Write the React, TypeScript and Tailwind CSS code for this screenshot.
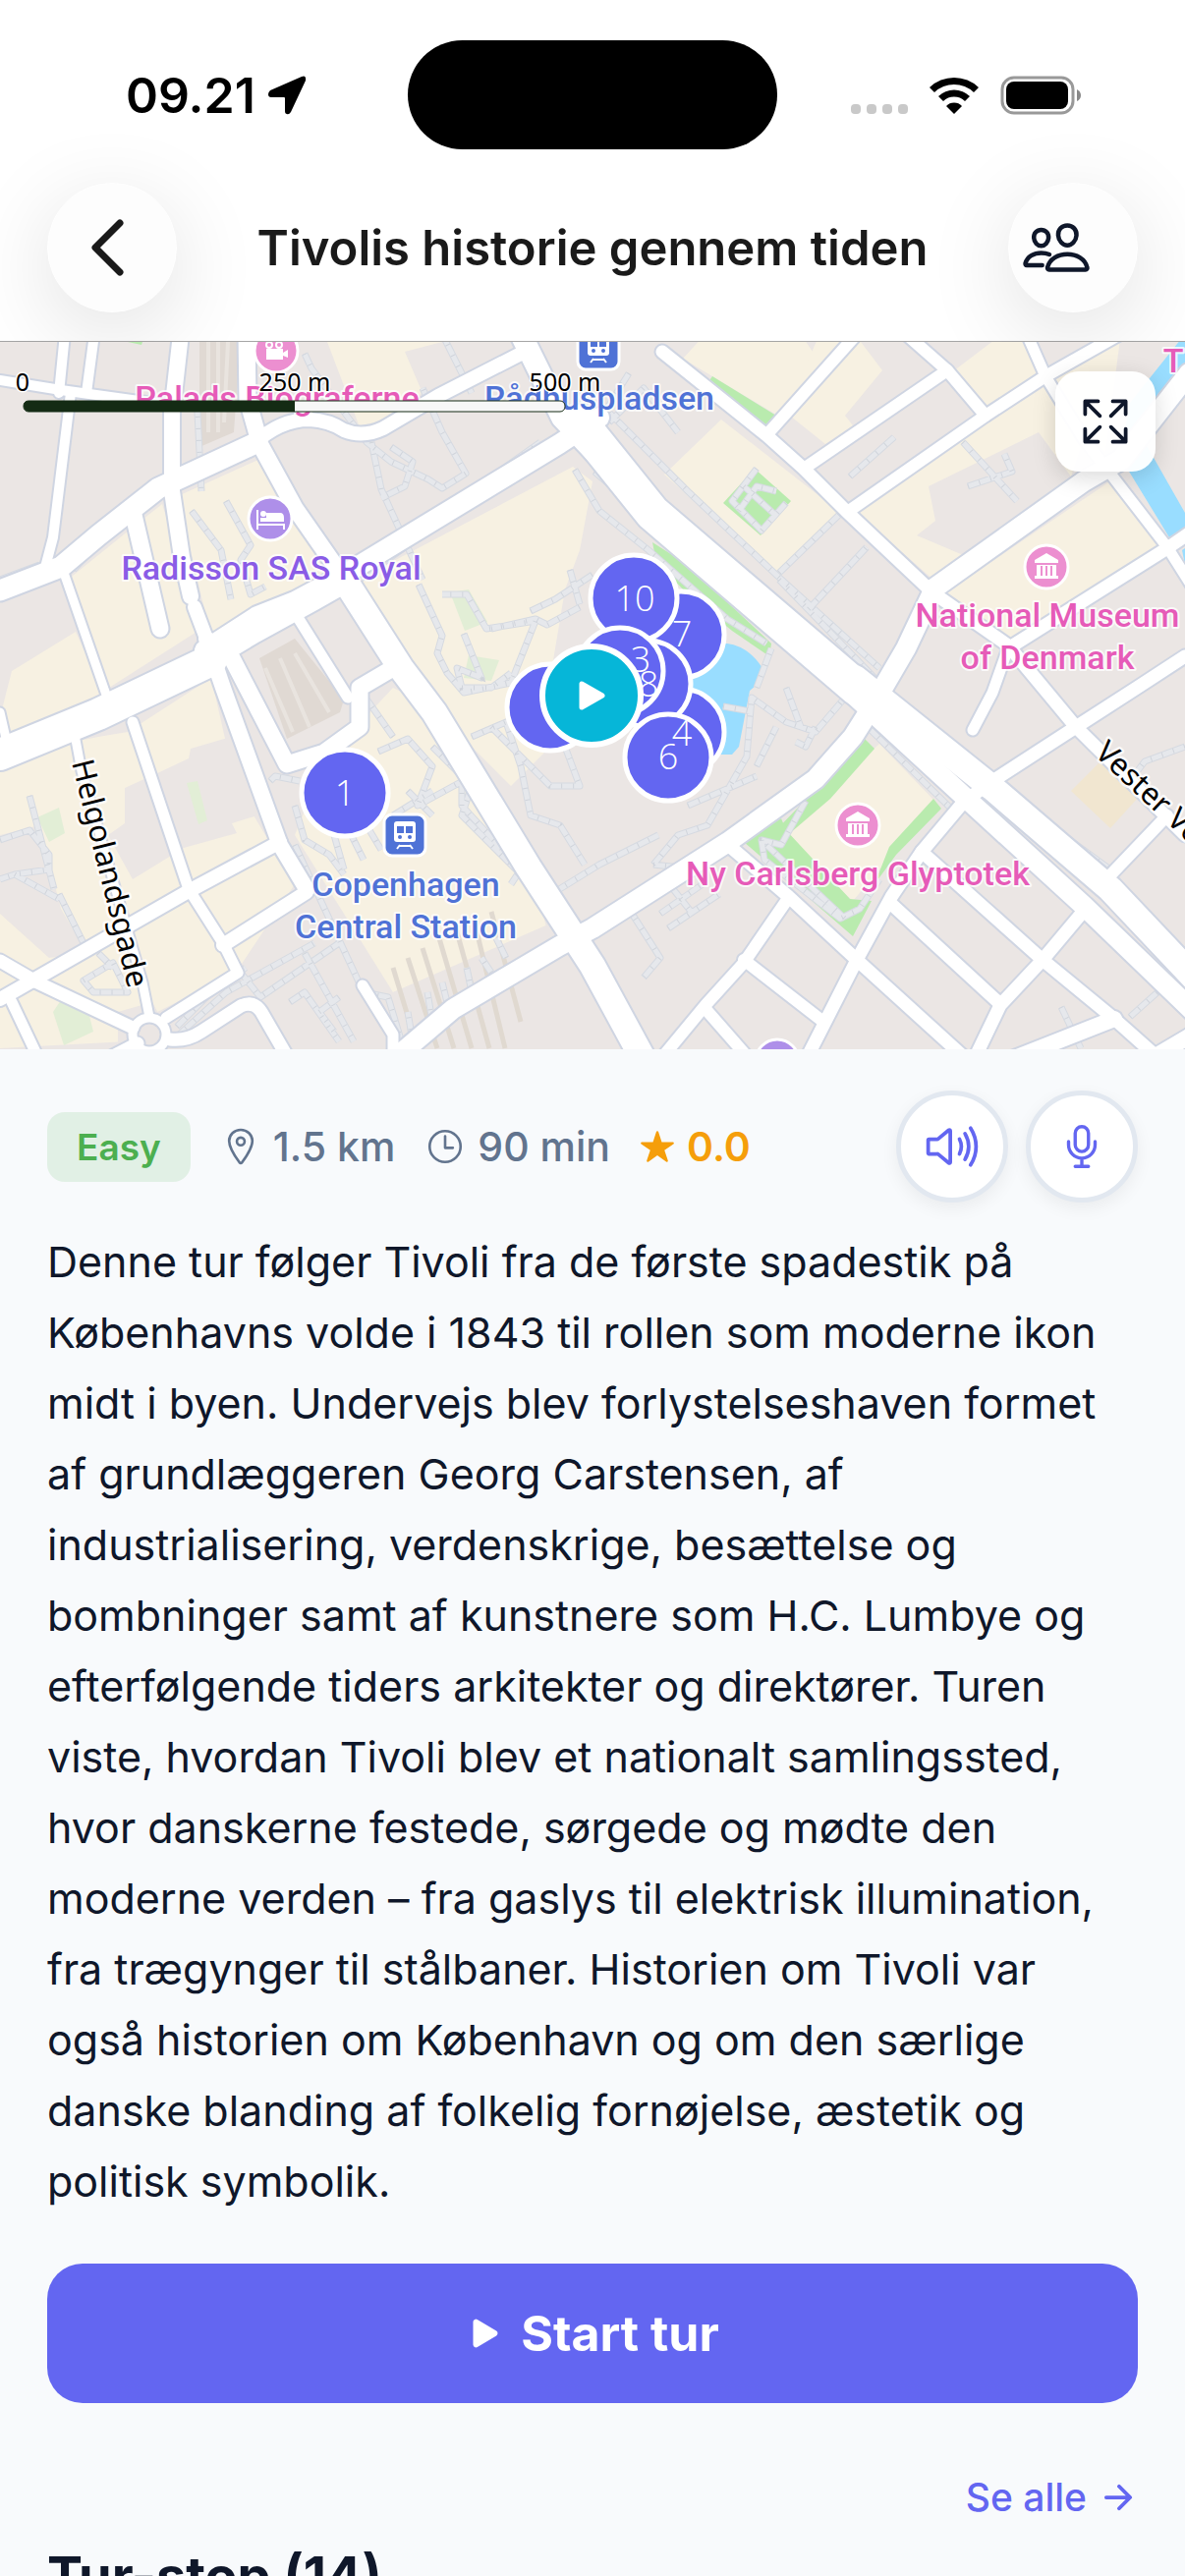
import type { ReactNode } from "react";
import {
  IoArrowForward,
  IoExpandOutline,
  IoLocationOutline,
  IoMicOutline,
  IoPeopleOutline,
  IoPlay,
  IoStar,
  IoTimeOutline,
  IoVolumeHighOutline,
} from "react-icons/io5";

type Road = { d: string; w: number };

const roads: Road[] = [
  { d: "M66 340L60 400M96 340L88 400", w: 10 },
  { d: "M0 387L62 397L170 412", w: 10 },
  { d: "M72 400L54 547L44 585", w: 10 },
  { d: "M184 340L175 420L175 500L185 567L194 607", w: 16 },
  { d: "M198 618L212 655", w: 14 },
  { d: "M0 601L62 577L100 545L161 497L258 452", w: 21 },
  { d: "M258 452Q285 427 315 427Q335 428 350 438Q369 446 390 436L446 403L530 360", w: 14 },
  { d: "M251 340L252 407L265 453L300 517L346 583", w: 17 },
  { d: "M346 583L408 680L442 725L538 883L603 983L653 1075", w: 26 },
  { d: "M0 768L100 727L215 672", w: 32 },
  { d: "M208 662L262 627L300 612L345 588L569 452L610 425", w: 20 },
  { d: "M215 672L260 645L320 612L352 594", w: 18 },
  { d: "M530 340L572 425L610 465", w: 22 },
  { d: "M590 430L664 522L872 700", w: 36 },
  { d: "M850 690L988 817L1103 922L1215 1030", w: 20 },
  { d: "M870 690L1010 802L1130 905L1215 995", w: 26 },
  { d: "M674 358L780 443L818 477L861 520L949 603L1026 657L1095 740L1206 850", w: 13 },
  { d: "M872 340L780 443", w: 12 },
  { d: "M922 340L964 377L1003 423", w: 12 },
  { d: "M818 477L964 377", w: 12 },
  { d: "M864 520L1003 423L1064 383L1140 340", w: 12 },
  { d: "M1045 340L1064 383L1103 447L1188 557L1212 595", w: 11 },
  { d: "M949 600L1103 490L1141 468L1210 380", w: 20 },
  { d: "M1026 660L1188 558L1210 543", w: 13 },
  { d: "M949 603L922 660L887 720L868 750L830 793L741 857L603 945L569 963L461 1027L408 1072", w: 20 },
  { d: "M1026 660L1010 705L990 743", w: 11 },
  { d: "M1206 668L1157 700L1095 740L1007 797L980 817L938 867L907 913L872 977L822 1075", w: 13 },
  { d: "M741 860L803 913L872 977L980 1075", w: 13 },
  { d: "M803 913L757 980L718 1023L675 1075", w: 12 },
  { d: "M757 977L838 1040M718 1027L760 1075", w: 12 },
  { d: "M907 920L1018 1022", w: 13 },
  { d: "M938 867L1061 977L1134 1037L1180 1078", w: 13 },
  { d: "M1103 927L1061 977L1018 1023L993 1075", w: 13 },
  { d: "M1126 895L1188 830", w: 12 },
  { d: "M1030 1078L1134 1037M1176 1075L1210 1055", w: 16 },
  { d: "M77 753L83 785L145 1000L152 1035", w: 9 },
  { d: "M135 735L192 905L227 960L242 990L169 1036", w: 11 },
  { d: "M210 650L227 700L285 860L312 905", w: 16 },
  { d: "M236 670L292 778L330 766L366 740L366 700L400 680", w: 17 },
  { d: "M0 1017L192 907L285 857M227 962L312 908", w: 14 },
  { d: "M0 978L38 1000L135 1046", w: 13 },
  { d: "M173 1058Q190 1060 205 1050L245 1024Q258 1018 266 1030L292 1075M140 1062L115 1075", w: 13 },
  { d: "M12 1020L38 1075", w: 11 },
  { d: "M65 583L108 707L114 725M0 725L8 760", w: 9 },
  { d: "M369 1003L400 1053L400 1075", w: 11 },
  { d: "M304 630L354 710", w: 11 },
  { d: "M135 520L163 640", w: 17 },
];

const blocks = [
  "181,505 265,467 340,590 215,650",
  "131,540 165,513 205,640 111,700 69,590",
  "12,683 77,643 110,715 0,770 0,730",
  "330,340 450,348 412,358 430,400 368,440",
  "583,475 603,490 590,560 575,600 560,690 560,760 520,800 440,720 355,595",
  "695,365 718,340 815,340 837,373 795,425",
  "834,340 870,340 898,377 860,423 868,433 840,452 800,420",
  "734,427 857,523 788,583 676,483",
  "870,520 1003,430 1062,388 1100,455 1090,485 1057,440 945,495 952,530 933,545 985,567 950,590",
  "970,378 1020,340 1045,340 1062,380 1003,420",
  "1070,385 1140,345 1125,460 1105,440",
  "960,605 1134,487 1184,557 1026,653",
  "895,757 953,817 868,917 795,850",
  "0,775 75,755 100,750 130,745 215,690 240,800 300,900 240,990 160,1030 130,1060 0,1067",
  "330,775 400,700 440,720 545,900 560,960 520,965 400,1010 300,850",
];

const greyBlocks = [
  "158,788 192,772 194,762 235,750 262,830 236,838 241,848 187,863 135,895 110,850 127,838 127,802",
  "0,850 40,840 62,925 88,970 50,975 0,930",
  "200,1030 310,960 345,960 390,1067 180,1067",
  "400,1010 560,940 603,985 640,1067 410,1067",
  "120,1030 155,1020 180,1067 120,1067",
];

const greens = [
  "725,383 790,423 776,437 720,390",
  "768,477 805,510 774,545 736,512",
  "664,552 700,575 785,655 783,668 745,642 700,605 668,572",
  "757,857 795,833 800,845 865,915 887,917 868,953",
  "880,752 890,762 845,813 790,860 785,850",
  "950,813 958,823 912,870 890,900 905,862",
  "905,730 1000,792 985,798",
  "130,348 145,348 144,351",
];

const paleGreens = [
  "458,603 477,600 496,633 473,642",
  "477,667 508,672 500,693 472,690",
  "38,832 60,822 66,848 50,857",
  "190,797 201,795 211,835 202,839",
  "62,1018 90,1030 95,1050 65,1064 54,1030",
];

const footways =
  "M310 360L317 375L373 450L398 470L436 488L450 497L474 482L450 440L430 395M378 450L388 498L430 590M398 455L420 470L412 495L388 507M352 600L545 462M356 588L550 450" +
  "M426 595L450 647L445 665L455 685L472 705L520 695L545 632L495 640L475 605L450 605M472 645L490 690L465 680L470 700L500 700L520 685M585 478L610 520L660 560L740 630L780 655" +
  "M500 640L545 630L557 636L590 618M580 580L590 615M545 462L540 470M605 480L790 640M620 420L700 500L790 585L895 680" +
  "M793 583L855 523M823 620L882 557M793 590L890 690M620 430L655 395L690 440M640 380L615 420" +
  "M770 477L745 510L775 540L800 512M757 495L790 525M752 520L770 495L790 500" +
  "M665 880L690 850L720 840L760 770L765 710L800 735L830 745L860 710M665 880L710 885L760 835L790 815M770 780L790 740M545 920L610 880L670 850M700 820L770 790" +
  "M770 700L785 660M800 700L815 740M830 740L820 760L810 755M736 719L764 724" +
  "M885 742L970 825M900 720L1010 795M985 820L1100 915M1030 812L1130 885M1110 930L1206 1015" +
  "M820 815L795 860L775 855L778 875L855 935L875 925L895 895M780 860L860 935" +
  "M672 930L715 900M680 945L732 910M685 905L705 930M640 925L672 975L655 995" +
  "M980 450L1035 510M985 495L1030 480L1022 462M865 485L910 445" +
  "M385 765L415 752L440 780L425 820L480 790M400 830L440 805M440 760L480 800L470 830L530 890M415 700L445 745L455 755M470 795L470 820L530 885L520 900" +
  "M480 750L515 735L530 780L540 830L570 840L595 880M500 740L560 800L590 800L575 760" +
  "M300 820L310 855L335 870L350 890M275 795L280 790L305 795M300 860L370 1010L395 1015L410 1065M340 850L350 885M355 845L370 875M370 835L388 865M415 805L440 830" +
  "M0 855L30 845L50 870L50 885L15 890L0 895M15 890L60 915M30 810L55 905M60 910L85 960" +
  "M85 998L115 980L130 1010L95 1010ZM100 970L115 985M180 1055L230 1010L320 960M245 990L265 1015L345 960M310 970L360 1060M295 1020L310 1010L345 1060M345 1015L325 1030L340 1050" +
  "M200 400L205 500M180 1045L215 1010L250 985M365 700L400 750M75 580L155 490M0 590L40 575M450 340L480 400M195 520L225 560L235 610M230 510L255 555L245 570L255 605L270 597" +
  "M540 622L565 610L603 585M420 1060L415 1030M440 1040L435 1010M455 1020L450 1000M480 1010L475 985M500 990L490 975M515 975L505 955M1206 760L1165 775L1150 795M1150 1035L1206 985M1080 1025L1100 1067";

const rails = [
  "203,340 245,340 238,440 203,455",
  "264,670 300,650 350,712 346,725 292,752",
];

const markers = [
  { x: 560, y: 720 },
  { x: 693, y: 646 },
  { x: 693, y: 745 },
  { x: 645, y: 609 },
  { x: 659, y: 696 },
  { x: 631, y: 683 },
  { x: 680, y: 771 },
  { x: 351, y: 807 },
];

const markerLabels = [
  { x: 694, y: 658, label: "7" },
  { x: 694, y: 759, label: "4" },
  { x: 646, y: 622, label: "10" },
  { x: 660, y: 709, label: "8" },
  { x: 652, y: 684, label: "3" },
  { x: 680, y: 783, label: "6" },
  { x: 351, y: 820, label: "1" },
];

function MuseumPin({ x, y }: { x: number; y: number }) {
  return (
    <g transform={`translate(${x} ${y})`}>
      <circle r="22" fill="#ec8fd0" stroke="#fff" strokeWidth="3" />
      <path d="M-12 -7L0 -14L12 -7V-4H-12ZM-10 -2H10V9H12V12H-12V9H-10Z" fill="#fff" />
      <path d="M-5 -1V9M0 -1V9M5 -1V9" stroke="#ec8fd0" strokeWidth="2" />
    </g>
  );
}

function StationPin({ x, y }: { x: number; y: number }) {
  return (
    <g transform={`translate(${x} ${y})`}>
      <rect x="-21" y="-21" width="42" height="42" rx="8" fill="#4f72d6" stroke="#fff" strokeWidth="3" />
      <rect x="-11" y="-14" width="22" height="21" rx="3" fill="#fff" />
      <path d="M-8 -9H-1V-2H-8ZM1 -9H8V-2H1Z" fill="#4f72d6" />
      <circle cx="-5" cy="2" r="2" fill="#4f72d6" />
      <circle cx="5" cy="2" r="2" fill="#4f72d6" />
      <path d="M-5 10L-8 14M5 10L8 14M-6 11H6" stroke="#fff" strokeWidth="2" />
    </g>
  );
}

function MapLabel({ x, y, color, children }: { x: number; y: number; color: string; children: ReactNode }) {
  return (
    <text
      x={x}
      y={y}
      fill={color}
      textAnchor="middle"
      className="font-[Roboto,sans-serif] text-[34px] font-medium"
      stroke="#fff"
      strokeOpacity="0.8"
      strokeWidth="4"
      strokeLinejoin="round"
      paintOrder="stroke"
    >
      {children}
    </text>
  );
}

function TourMap() {
  return (
    <svg
      viewBox="0 348 1206 720"
      preserveAspectRatio="xMidYMid slice"
      className="block w-full"
      role="img"
      aria-label="Kort over turen"
    >
      <rect y="340" width="1206" height="740" fill="#ebe6e4" />
      {blocks.map((p) => (
        <polygon key={p} points={p} fill="#f7f1e2" />
      ))}
      {greyBlocks.map((p) => (
        <polygon key={p} points={p} fill="#ebe6e4" />
      ))}
      <polygon points="1120,775 1160,810 1130,843 1090,805" fill="#f1e6d0" />
      {paleGreens.map((p) => (
        <polygon key={p} points={p} fill="#e2eed6" />
      ))}
      {greens.map((p) => (
        <polygon key={p} points={p} fill="#b9ebae" />
      ))}
      <path d="M740 655Q762 658 776 680V692L763 703L752 760L745 768H690V655Z" fill="#99ddff" />
      <path d="M1206 340L1150 410L1140 465L1190 547L1206 538V522L1165 450L1206 380Z" fill="#99ddff" />
      <path d="M1203 560L1206 558V575Z" fill="#99ddff" />
      {rails.map((p) => (
        <polygon key={p} points={p} fill="#e0d9d3" />
      ))}
      <path
        d="M212 348V440M222 348V440M232 348L228 430M270 680L298 745M285 670L315 740M300 665L335 725"
        stroke="#e9e4df"
        strokeWidth="4"
        fill="none"
      />
      <path
        d="M400 985L425 1067M415 975L445 1067M430 965L462 1067M447 955L480 1067M464 945L498 1067M482 935L514 1067M500 928L530 1040"
        stroke="#e0d9d0"
        strokeWidth="5"
        fill="none"
      />
      <path d={footways} fill="none" stroke="#d6dae1" strokeWidth="7" strokeLinejoin="round" />
      <path d={footways} fill="none" stroke="#e6e8ec" strokeWidth="5" strokeLinejoin="round" />
      <path d={footways} fill="none" stroke="#d0d4db" strokeWidth="5" strokeDasharray="1 11" />
      <g fill="none" stroke="#cfd5e2" strokeLinecap="round" strokeLinejoin="round">
        {roads.map((r) => (
          <path key={r.d} d={r.d} strokeWidth={r.w + 4} />
        ))}
        <circle cx="152" cy="1053" r="17" strokeWidth="13" />
      </g>
      <g fill="none" stroke="#fff" strokeLinecap="round" strokeLinejoin="round">
        {roads.map((r) => (
          <path key={r.d} d={r.d} strokeWidth={r.w} />
        ))}
        <circle cx="152" cy="1053" r="17" strokeWidth="9" />
      </g>

      <circle cx="281" cy="357" r="22" fill="#ec8fd0" stroke="#fff" strokeWidth="3" />
      <path d="M271 355H288V359L293 356V364L288 362V366H271Z" fill="#fff" />
      <circle cx="274" cy="351" r="3" fill="none" stroke="#fff" strokeWidth="2" />
      <circle cx="284" cy="351" r="3" fill="none" stroke="#fff" strokeWidth="2" />
      <StationPin x={609} y={355} />
      <circle cx="275" cy="528" r="22" fill="#ae8fe9" stroke="#fff" strokeWidth="3" />
      <path d="M262 519V539M262 534H289V539" stroke="#fff" strokeWidth="2" fill="none" />
      <path d="M265 527H271V522H285Q289 522 289 527V531H265Z" fill="#fff" />
      <circle cx="268" cy="523" r="3" fill="#fff" />
      <MuseumPin x={1065} y={577} />
      <MuseumPin x={873} y={840} />
      <StationPin x={412} y={850} />
      <circle cx="791" cy="1080" r="22" fill="#ae8fe9" stroke="#fff" strokeWidth="3" />

      <MapLabel x={282} y={417} color="#e65bb8">Palads Biograferne</MapLabel>
      <MapLabel x={610} y={417} color="#4f72d6">Rådhuspladsen</MapLabel>
      <MapLabel x={276} y={590} color="#8a5ce6">Radisson SAS Royal</MapLabel>
      <MapLabel x={1066} y={638} color="#e65bb8">National Museum</MapLabel>
      <MapLabel x={1066} y={681} color="#e65bb8">of Denmark</MapLabel>
      <MapLabel x={873} y={901} color="#e65bb8">Ny Carlsberg Glyptotek</MapLabel>
      <MapLabel x={413} y={912} color="#4f72d6">Copenhagen</MapLabel>
      <MapLabel x={413} y={955} color="#4f72d6">Central Station</MapLabel>
      <MapLabel x={1194} y={379} color="#e65bb8">T</MapLabel>

      <g
        className="font-['Noto_Sans',sans-serif] text-[31px]"
        fill="#000"
        stroke="#fff"
        strokeOpacity="0.8"
        strokeWidth="5"
        strokeLinejoin="round"
        paintOrder="stroke"
      >
        <text transform="translate(73 776) rotate(76)">Helgolandsgade</text>
        <text transform="translate(1113 768) rotate(43)">Vester Voldgade</text>
      </g>

      <rect x="24" y="408" width="551" height="11" rx="5" fill="#f7f7f7" stroke="#142b14" />
      <path d="M300 408H29Q24 408 24 413T29 419H300Z" fill="#142b14" />
      <g
        className="font-['Noto_Sans',sans-serif] text-[25px]"
        textAnchor="middle"
        stroke="#fff"
        strokeWidth="3"
        strokeLinejoin="round"
        paintOrder="stroke"
      >
        <text x="23" y="398">0</text>
        <text x="300" y="398">250 m</text>
        <text x="575" y="398">500 m</text>
      </g>

      {markers.map((m) => (
        <circle key={`${m.x}-${m.y}`} cx={m.x} cy={m.y} r="44" fill="#6366f1" stroke="#fff" strokeWidth="5" />
      ))}
      <g className="font-['Open_Sans',sans-serif] text-[36px] font-light" fill="#fff" textAnchor="middle">
        {markerLabels.map((m) => (
          <text key={m.label} x={m.x} y={m.y}>
            {m.label}
          </text>
        ))}
      </g>
      <circle cx="602" cy="708" r="50" fill="#06b6d8" stroke="#fff" strokeWidth="6" />
      <path d="M592 696V720L613 708Z" fill="#fff" stroke="#fff" strokeWidth="5" strokeLinejoin="round" />
    </svg>
  );
}

function StatusBar() {
  return (
    <div className="grid grid-cols-[1fr_376px_1fr] items-center pt-[41px] text-black">
      <div className="flex items-center gap-3 pl-32">
        <span className="text-[50px] leading-none font-semibold">09.21</span>
        <svg viewBox="0 0 40 40" className="size-10" fill="currentColor" aria-hidden="true">
          <path d="M35 1Q40 -1 39 5L24 37Q22 40 20 39Q18 39 18 36V23Q18 22 17 22H4Q1 22 1 19Q1 17 3 15Z" />
        </svg>
      </div>
      <div className="h-[111px] rounded-full bg-black" />
      <div className="flex items-center justify-end gap-[21px] pr-[106px]">
        <svg viewBox="0 0 58 38" className="h-[38px] w-[58px]" fill="#c9c9c9" aria-hidden="true">
          <rect x="0" y="28" width="10" height="10" rx="4" />
          <rect x="16" y="28" width="10" height="10" rx="4" />
          <rect x="32" y="28" width="10" height="10" rx="4" />
          <rect x="48" y="28" width="10" height="10" rx="4" />
        </svg>
        <svg viewBox="0 0 52 38" className="h-[38px] w-[52px]" fill="#000" aria-hidden="true">
          <path d="M1 11A36 36 0 0 1 51 11L46 16A29 29 0 0 0 6 16Z" />
          <path d="M10 20A23 23 0 0 1 42 20L37 25A16 16 0 0 0 15 25Z" />
          <path d="M26 38L18 30A11 11 0 0 1 34 30Z" />
        </svg>
        <svg viewBox="0 0 82 40" className="h-10 w-[82px]" aria-hidden="true">
          <rect x="2" y="2" width="72" height="36" rx="12" fill="none" stroke="#999" strokeWidth="3" />
          <rect x="6" y="6" width="63" height="28" rx="8" fill="#000" />
          <path d="M78 14Q82 16 82 20T78 26Z" fill="#888" />
        </svg>
      </div>
    </div>
  );
}

function Stat({ icon, children }: { icon: ReactNode; children: ReactNode }) {
  return (
    <span className="flex items-center gap-3">
      {icon}
      {children}
    </span>
  );
}

const roundButton =
  "flex size-[114px] items-center justify-center rounded-full border-[5px] border-slate-200 bg-white text-[#6366f1] shadow-[0_6px_18px_rgba(0,0,0,0.06)]";

const navButton =
  "flex size-[132px] items-center rounded-full border border-white bg-[#fdfdfd] shadow-[0_20px_90px_rgba(0,0,0,0.12)]";

export default function App() {
  return (
    <div className="flex h-screen flex-col overflow-hidden bg-[#f8fafc] font-[Inter,sans-serif] text-[#0f172a]">
      <header className="border-b border-[#a5a5a5] bg-white">
        <StatusBar />
        <div className="flex items-center justify-between px-12 pt-[34px] pb-[29px]">
          <button type="button" aria-label="Tilbage" className={`${navButton} justify-center pr-2`}>
            <svg viewBox="0 0 34 58" className="h-[58px] w-[34px]" fill="none" aria-hidden="true">
              <path
                d="M29 4L4 29L29 54"
                stroke="#1a1a1a"
                strokeWidth="7"
                strokeLinecap="round"
                strokeLinejoin="round"
              />
            </svg>
          </button>
          <h1 className="text-[49px] leading-none font-semibold text-[#1a1a1a]">Tivolis historie gennem tiden</h1>
          <button type="button" aria-label="Deltagere" className={`${navButton} justify-start pl-3`}>
            <IoPeopleOutline className="size-[72px]" />
          </button>
        </div>
      </header>

      <div className="relative">
        <TourMap />
        <button
          type="button"
          aria-label="Fuld skærm"
          className="absolute top-[30px] right-[30px] flex size-[102px] items-center justify-center rounded-3xl bg-white/95 shadow-[0_6px_24px_rgba(0,0,0,0.15)]"
        >
          <IoExpandOutline className="size-[60px]" />
        </button>
      </div>

      <main className="px-12 pt-[42px]">
        <div className="flex items-center justify-between">
          <div className="flex items-center gap-[30px] text-[41px] leading-none font-medium text-slate-500">
            <span className="rounded-[18px] bg-[#e1f0e5] px-[30px] py-[17px] text-[37px] font-semibold text-[#4caf50]">
              Easy
            </span>
            <Stat icon={<IoLocationOutline className="size-[42px]" />}>1.5 km</Stat>
            <Stat icon={<IoTimeOutline className="size-[42px]" />}>90 min</Stat>
            <span className="font-semibold text-[#f59e0b]">
              <Stat icon={<IoStar className="size-9" />}>0.0</Stat>
            </span>
          </div>
          <div className="flex gap-[18px]">
            <button type="button" aria-label="Læs højt" className={roundButton}>
              <IoVolumeHighOutline className="size-[60px]" />
            </button>
            <button type="button" aria-label="Mikrofon" className={roundButton}>
              <IoMicOutline className="size-[54px]" />
            </button>
          </div>
        </div>

        <p className="mt-6 text-[43px] leading-[72px]">
          Denne tur følger Tivoli fra de første spadestik på Københavns volde i 1843 til rollen som moderne ikon midt
          i byen. Undervejs blev forlystelseshaven formet af grundlæggeren Georg Carstensen, af industrialisering,
          verdenskrige, besættelse og bombninger samt af kunstnere som H.C. Lumbye og efterfølgende tiders arkitekter
          og direktører. Turen viste, hvordan Tivoli blev et nationalt samlingssted, hvor danskerne festede, sørgede
          og mødte den moderne verden – fra gaslys til elektrisk illumination, fra trægynger til stålbaner. Historien
          om Tivoli var også historien om København og om den særlige danske blanding af folkelig fornøjelse, æstetik
          og politisk symbolik.
        </p>

        <button
          type="button"
          className="mt-12 flex h-[142px] w-full items-center justify-center gap-4 rounded-[36px] bg-[#6366f1] text-[50px] leading-none font-bold text-white"
        >
          <IoPlay className="size-10" />
          Start tur
        </button>

        <div className="mt-[72px] flex justify-end">
          <a href="#stops" className="flex items-center gap-3 text-[39px] leading-[48px] font-medium text-[#6366f1]">
            Se alle
            <IoArrowForward className="size-10" />
          </a>
        </div>
        <h2 id="stops" className="mt-6 text-[54px] leading-[64px] font-bold">
          Tur-stop (14)
        </h2>
      </main>
    </div>
  );
}
